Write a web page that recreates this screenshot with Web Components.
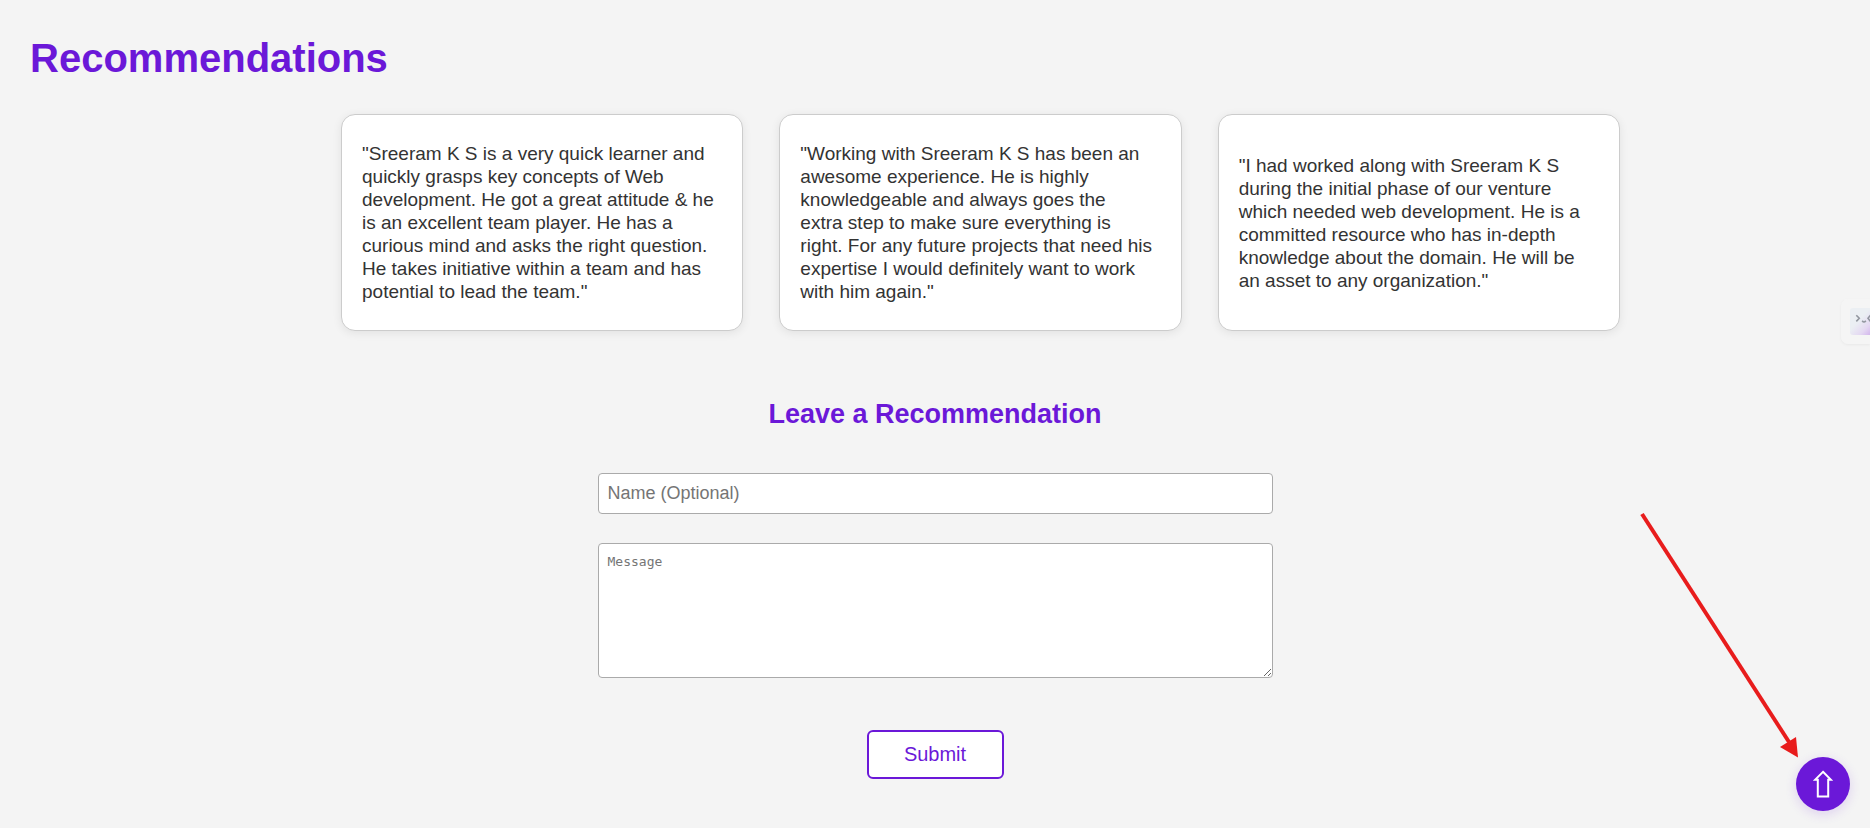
<!DOCTYPE html>
<html lang="en">
<head>
<meta charset="utf-8">
<meta name="viewport" content="width=device-width, initial-scale=1">
<title>Recommendations</title>
<style>
  body {
    margin: 0;
    background: #f4f4f4;
    color: #333;
    font-family: "Liberation Sans", Arial, sans-serif;
    --accent: #6b18d8;
  }
</style>
</head>
<body>
<recommendation-page></recommendation-page>

<script>
const define = (name, html, setup) => {
  const template = document.createElement('template');
  template.innerHTML = html;
  customElements.define(name, class extends HTMLElement {
    constructor() {
      super();
      this.attachShadow({ mode: 'open' }).append(template.content.cloneNode(true));
      if (setup) setup(this.shadowRoot);
    }
  });
};

define('recommendation-card', `
  <style>
    :host {
      display: flex;
      align-items: center;
      box-sizing: border-box;
      min-height: 217px;
      padding: 20px 26px 20px 20px;
      background: #fff;
      border: 1px solid #ccc;
      border-radius: 14px;
      box-shadow: 0 2px 10px rgba(0, 0, 0, .08);
    }
    p { margin: 0; font-size: 19px; line-height: 23px; }
  </style>
  <p><slot></slot></p>
`);

define('recommendation-form', `
  <style>
    :host { display: block; }
    form { display: flex; flex-direction: column; align-items: center; }
    h2 { margin: 0 0 43px; font-size: 27px; line-height: 32px; color: var(--accent); }
    input, textarea {
      display: block;
      box-sizing: border-box;
      width: 100%;
      max-width: 675px;
      padding: 9px;
      border: 1px solid #aaa;
      border-radius: 4px;
      background: #fff;
    }
    input { height: 41px; margin-bottom: 29px; font: 18px "Liberation Sans", Arial, sans-serif; }
    textarea { height: 135px; margin-bottom: 52px; font: 13px/18px "DejaVu Sans Mono", monospace; }
    button {
      width: 137px;
      height: 49px;
      border: 2px solid var(--accent);
      border-radius: 6px;
      background: #fff;
      color: var(--accent);
      font: 20px "Liberation Sans", Arial, sans-serif;
    }
  </style>
  <form>
    <h2>Leave a Recommendation</h2>
    <input type="text" aria-label="Name" placeholder="Name (Optional)">
    <textarea aria-label="Message" placeholder="Message"></textarea>
    <button type="submit">Submit</button>
  </form>
`, root => root.querySelector('form').addEventListener('submit', e => e.preventDefault()));

define('back-to-top', `
  <style>
    :host { position: fixed; right: 20px; bottom: 17px; }
    a {
      display: flex;
      align-items: center;
      justify-content: center;
      width: 54px;
      height: 54px;
      border-radius: 50%;
      background: var(--accent);
      box-shadow: 0 3px 12px rgba(107, 24, 216, .16);
    }
  </style>
  <a href="#" aria-label="Back to top">
    <svg width="20" height="28" viewBox="0 0 20 28" fill="none" stroke="#fff" stroke-width="2">
      <path d="M10 1.8 18 9.8H15.2V26.4H4.8V9.8H2Z"/>
    </svg>
  </a>
`);

define('side-assistant', `
  <style>
    :host { position: fixed; right: 0; top: 299px; }
    button {
      display: flex;
      align-items: center;
      box-sizing: border-box;
      width: 29px;
      height: 45px;
      padding: 0 0 0 9px;
      border: 0;
      border-radius: 7px 0 0 7px;
      background: #f5f5f5;
      box-shadow: 0 1px 3px rgba(0, 0, 0, .05);
    }
  </style>
  <button type="button" aria-label="Open assistant">
    <svg width="20" height="27" viewBox="0 0 20 27">
      <defs>
        <linearGradient id="tint" x1=".2" y1="0" x2="1" y2="1">
          <stop offset=".4" stop-color="#ebeff3"/>
          <stop offset=".75" stop-color="#e4d8f2"/>
          <stop offset="1" stop-color="#d3b6ed"/>
        </linearGradient>
      </defs>
      <path d="M3 0H20V27H3Q0 27 0 24V3Q0 0 3 0Z" fill="url(#tint)"/>
      <path d="M6.3 7.2 9.3 10.3 6.3 13.4M12.2 12.7Q14 15.2 15.8 12.7M20.5 7.2 18 10.3 20.5 13.4" fill="none" stroke="#92969f" stroke-width="1.6"/>
    </svg>
  </button>
`);

define('pointer-arrow', `
  <style>
    :host { position: fixed; right: 71px; bottom: 70px; pointer-events: none; }
    svg { display: block; }
  </style>
  <svg width="160" height="246" viewBox="0 0 160 246" aria-hidden="true">
    <path d="M3 2 150 230" stroke="#e81c1c" stroke-width="4"/>
    <path d="M159 245.500 157 225 141 235Z" fill="#e81c1c"/>
  </svg>
`);

define('recommendation-page', `
  <style>
    :host { display: block; padding: 35px 30px; }
    h1 { margin: 0 0 33px; font-size: 40px; line-height: 46px; color: var(--accent); }
    .cards {
      display: grid;
      grid-template-columns: repeat(auto-fit, minmax(300px, 1fr));
      gap: 36px;
      max-width: 1279px;
      margin: 0 auto 67px;
      padding-left: 91px;
    }
  </style>
  <main>
    <h1>Recommendations</h1>
    <section class="cards">
      <recommendation-card>"Sreeram K S is a very quick learner and quickly grasps key concepts of Web development. He got a great attitude &amp; he is an excellent team player. He has a curious mind and asks the right question. He takes initiative within a team and has potential to lead the team."</recommendation-card>
      <recommendation-card>"Working with Sreeram K S has been an awesome experience. He is highly knowledgeable and always goes the extra&nbsp;step to make sure everything is right. For any future projects that need his expertise I would definitely want to work with him again."</recommendation-card>
      <recommendation-card>"I had worked along with Sreeram K S during the initial phase of our venture which needed web development. He is a committed resource who has in-depth knowledge about the domain. He will be an asset to any organization."</recommendation-card>
    </section>
    <recommendation-form></recommendation-form>
  </main>
  <pointer-arrow></pointer-arrow>
  <back-to-top></back-to-top>
  <side-assistant></side-assistant>
`);
</script>
</body>
</html>
